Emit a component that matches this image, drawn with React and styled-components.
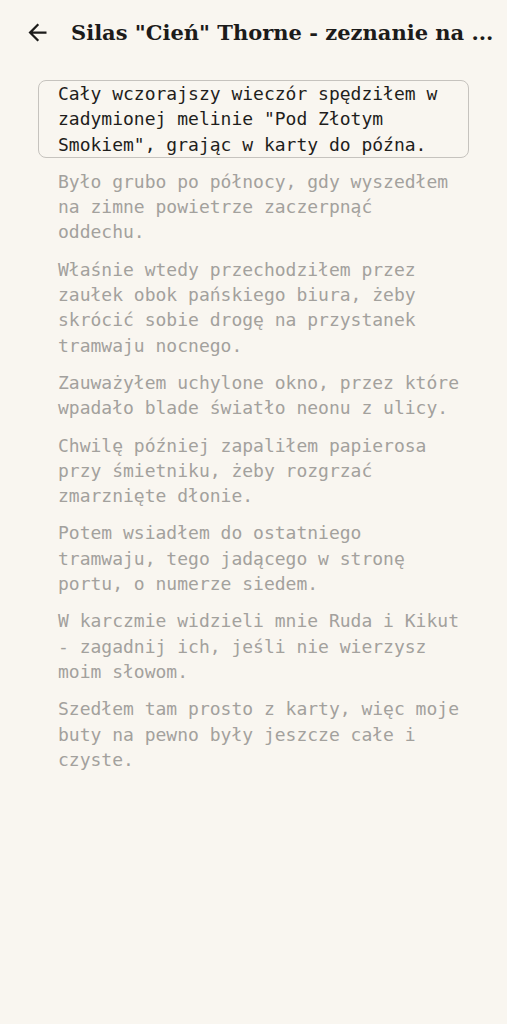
import React from 'react'
import styled, { createGlobalStyle } from 'styled-components'

const GlobalStyle = createGlobalStyle`
    html, body {
        margin: 0;
        padding: 0;
        background: #f9f6f0;
    }
`

const Page = styled.div`
    width: 507px;
    min-height: 1024px;
    background: #f9f6f0;
`

const Header = styled.header`
    display: flex;
    align-items: center;
    height: 64px;
    padding: 0 12px 0 23px;
    gap: 20px;
`

const BackButton = styled.button`
    display: flex;
    align-items: center;
    justify-content: center;
    flex-shrink: 0;
    width: 28px;
    height: 28px;
    padding: 0;
    border: none;
    background: none;
    color: #1c1b1a;
    cursor: pointer;
`

const Title = styled.h1`
    margin: 0;
    font-family: "DejaVu Serif", "Liberation Serif", serif;
    font-weight: 700;
    font-size: 21px;
    color: #1c1b1a;
    white-space: nowrap;
    overflow: hidden;
`

const Statement = styled.div`
    display: flex;
    flex-direction: column;
    gap: 10px;
    padding: 16px 38px;
`

const Line = styled.p`
    margin: 0;
    padding: 0 6px 0 19px;
    font-family: "DejaVu Sans Mono", "Liberation Mono", monospace;
    font-size: 18px;
    line-height: 25.3px;
    border: 1px solid ${p => (p.$active ? '#c6c3be' : 'transparent')};
    border-radius: 8px;
    color: ${p => (p.$active ? '#1f1e1c' : '#a3a19d')};
`

const lines = [
    'Cały wczorajszy wieczór spędziłem w zadymionej melinie "Pod Złotym Smokiem", grając w karty do późna.',
    'Było grubo po północy, gdy wyszedłem na zimne powietrze zaczerpnąć oddechu.',
    'Właśnie wtedy przechodziłem przez zaułek obok pańskiego biura, żeby skrócić sobie drogę na przystanek tramwaju nocnego.',
    'Zauważyłem uchylone okno, przez które wpadało blade światło neonu z ulicy.',
    'Chwilę później zapaliłem papierosa przy śmietniku, żeby rozgrzać zmarznięte dłonie.',
    'Potem wsiadłem do ostatniego tramwaju, tego jadącego w stronę portu, o numerze siedem.',
    'W karczmie widzieli mnie Ruda i Kikut - zagadnij ich, jeśli nie wierzysz moim słowom.',
    'Szedłem tam prosto z karty, więc moje buty na pewno były jeszcze całe i czyste.',
]

export default function App() {
    const current = 0

    return (
        <Page>
            <GlobalStyle />
            <Header>
                <BackButton aria-label="Wstecz">
                    <svg width="27" height="27" viewBox="0 0 24 24" fill="currentColor">
                        <path d="M20 11H7.83l5.59-5.59L12 4l-8 8 8 8 1.41-1.41L7.83 13H20v-2z" />
                    </svg>
                </BackButton>
                <Title>Silas "Cień" Thorne - zeznanie na ...</Title>
            </Header>
            <Statement>
                {lines.map((text, i) => (
                    <Line key={i} $active={i === current}>{text}</Line>
                ))}
            </Statement>
        </Page>
    )
}
